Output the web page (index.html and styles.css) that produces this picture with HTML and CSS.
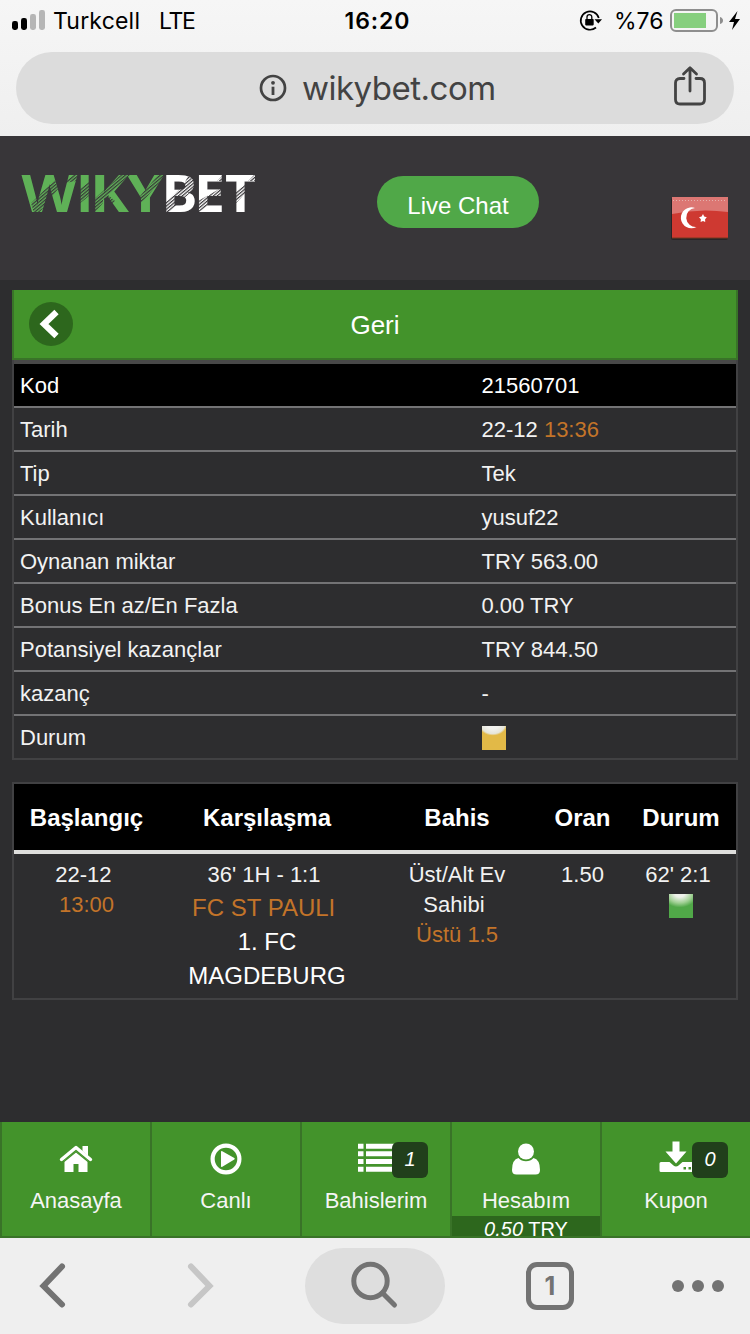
FILE: index.html
```html
<!DOCTYPE html>
<html lang="tr">
<head>
<meta charset="utf-8">
<title>Wikybet</title>
<link rel="stylesheet" href="styles.css">
</head>
<body>
<header class="browser-top">
  <div class="status">
    <div class="status-left">
      <svg class="signal" width="34" height="22" viewBox="0 0 34 22"><rect x="0" y="11" width="6" height="9" rx="2.4"/><rect x="9" y="8" width="6" height="12" rx="2.4"/><rect class="dim" x="18" y="4" width="6" height="16" rx="2.4"/><rect class="dim" x="27" y="0" width="6" height="20" rx="2.4"/></svg>
      <span class="carrier">Turkcell</span><span class="network">LTE</span>
    </div>
    <div class="clock">16:20</div>
    <div class="status-right">
      <svg class="lock" width="24" height="22" viewBox="0 0 24 22"><path d="M19.800 8A9.200 9.200 0 1 0 17 17.500" fill="none" stroke="#000" stroke-width="1.700"/><path d="M15.500 9.200H23L19.300 13.500z"/><rect x="6.200" y="9" width="8.500" height="6.400" rx=".8"/><path d="M8 9.500V7a2.400 2.400 0 0 1 4.800 0v2.500" fill="none" stroke="#000" stroke-width="1.300"/></svg>
      <span class="percent">%76</span>
      <svg class="battery" width="72" height="24" viewBox="0 0 72 24"><rect x="1" y="1" width="46" height="21" rx="5" fill="none" stroke="#8e8e8e" stroke-width="2"/><rect x="4" y="4" width="32" height="15" fill="#86cf7e"/><path d="M50 8q3 1 3 3.500T50 15z" fill="#8e8e8e"/><path d="M67.500 2 59 13h5l-2 8L70 10h-5z"/></svg>
    </div>
  </div>
  <div class="address">
    <svg class="info" width="28" height="28" viewBox="0 0 28 28"><circle cx="14" cy="14" r="12" fill="none" stroke="#434343" stroke-width="2.700"/><circle cx="14" cy="8.800" r="1.900" fill="#434343"/><rect x="12.600" y="12.700" width="2.800" height="8.300" fill="#434343"/></svg>
    <span class="url">wikybet.com</span>
    <svg class="share" width="32" height="40" viewBox="0 0 32 40" fill="none" stroke="#434343" stroke-width="2.800" stroke-linecap="round" stroke-linejoin="round"><path d="M10 12.500H6q-4.500 0-4.500 4.500v16.500q0 4.500 4.500 4.500h20q4.500 0 4.500-4.500V17q0-4.500-4.500-4.500h-4M16 25V2M9.500 8 16 1.700 22.500 8"/></svg>
  </div>
</header>

<main class="page">
  <div class="brand-bar">
    <svg class="logo" width="238" height="44" viewBox="0 0 238 44">
      <defs>
        <pattern id="hatch" width="3" height="2.500" patternUnits="userSpaceOnUse" patternTransform="rotate(-40)"><rect width="3" height="1.200" fill="#383639"/></pattern>
      </defs>
      <text class="logo-green" y="39"><tspan x="-.5" textLength="56" lengthAdjust="spacingAndGlyphs">W</tspan><tspan x="54">I</tspan><tspan x="68" textLength="39" lengthAdjust="spacingAndGlyphs">K</tspan><tspan x="105" textLength="37" lengthAdjust="spacingAndGlyphs">Y</tspan></text>
      <text class="logo-white" y="39"><tspan x="139.500" textLength="36" lengthAdjust="spacingAndGlyphs">B</tspan><tspan x="172" textLength="31" lengthAdjust="spacingAndGlyphs">E</tspan><tspan x="203" textLength="31" lengthAdjust="spacingAndGlyphs">T</tspan></text>
      <path fill="url(#hatch)" d="M9 30 33 7l3 9L17 40h-5zM43 9 54 0h4l-4 8-11 2zM56 18l12-10v14L56 32zM71 27 101 0h9L86 22l7 6-4 4-8-6v4l-9 10zM118 23 138 0h6l-3 6-22 24zM143 30l18-17 5-10 9 6-5 9-24 22h-3zM176 28l25-14v7l-25 19zM195 8l8-8v8zM213 20l11-10v10l-11 11zM226 8l9-9v9z"/>
    </svg>
    <a class="chat">Live Chat</a>
    <svg class="flag" width="60" height="46" viewBox="0 0 60 46">
      <rect x="1" y="2" width="57" height="42" rx="2" fill="#272527"/><rect x="2" y="1" width="56" height="41" fill="#ce3931"/><path d="M2 1h56v15q-28-4-56 2z" fill="#dc7773"/>
      <path d="M3 4.500h54" stroke="#e6b0ac" stroke-dasharray="1 2"/><path d="M2 42h56" stroke="#743921"/>
      <path d="M25 12a10.500 10.500 0 1 0 1.500 19 8.500 8.500 0 1 1-1.500-19z" fill="#fff"/><path d="m33 18 1.200 2.500 2.600.7-1.700 2.100.1 2.600-2.200-1-2.400 1 .3-2.600-1.900-2.100 2.600-.7z" fill="#fff"/>
    </svg>
  </div>

  <section class="coupon">
    <div class="title"><span class="back"><svg width="44" height="44" viewBox="0 0 44 44"><path d="M27.500 10 15 22l12.500 12" fill="none" stroke="#fff" stroke-width="6.200" stroke-linejoin="miter"/></svg></span><span>Geri</span></div>
    <div class="details">
      <div class="row first"><span>Kod</span><span>21560701</span></div>
      <div class="row"><span>Tarih</span><span>22-12 <b class="orange">13:36</b></span></div>
      <div class="row"><span>Tip</span><span>Tek</span></div>
      <div class="row"><span>Kullanıcı</span><span>yusuf22</span></div>
      <div class="row"><span>Oynanan miktar</span><span>TRY 563.00</span></div>
      <div class="row"><span>Bonus En az/En Fazla</span><span>0.00 TRY</span></div>
      <div class="row"><span>Potansiyel kazançlar</span><span>TRY 844.50</span></div>
      <div class="row"><span>kazanç</span><span>-</span></div>
      <div class="row"><span>Durum</span><span class="state pending"></span></div>
    </div>
  </section>

  <section class="bets">
    <div class="bets-head"><span>Başlangıç</span><span>Karşılaşma</span><span>Bahis</span><span>Oran</span><span>Durum</span></div>
    <div class="bets-body">
      <div><p>22-12&nbsp;</p><p class="orange">13:00</p></div>
      <div><p>36' 1H - 1:1&nbsp;</p><p class="team orange">FC ST PAULI&nbsp;</p><p class="team">1. FC</p><p class="team">MAGDEBURG</p></div>
      <div><p>Üst/Alt Ev</p><p>Sahibi&nbsp;</p><p class="orange">Üstü 1.5</p></div>
      <div><p>1.50</p></div>
      <div><p>62' 2:1&nbsp;</p><p class="state won"></p></div>
    </div>
  </section>
</main>

<nav class="tabs">
  <a class="tab"><svg width="34" height="34" viewBox="0 0 34 34"><path d="M2.500 16.500 17 4.500l14.500 12" fill="none" stroke="#fff" stroke-width="3.400" stroke-linecap="round" stroke-linejoin="round"/><path d="M23.500 3H29v10l-5.500-5zM5.500 17.500 17 8.500l11.500 9V29h-9v-8h-5v8h-9z" fill="#fff"/><path d="M5 18.500 17 8.800l12 9.700" fill="none" stroke="#43932b" stroke-width="1.200"/></svg><span>Anasayfa</span></a>
  <a class="tab"><svg width="34" height="34" viewBox="0 0 34 34"><circle cx="17" cy="16" r="13.400" fill="none" stroke="#fff" stroke-width="4.200"/><path d="M12 9q0-1.500 1.300-.7l12 6.700q1 .9 0 1.600l-12 7.100q-1.300.7-1.300-.8z" fill="#fff"/></svg><span>Canlı</span></a>
  <a class="tab"><svg width="36" height="34" viewBox="0 0 36 34" fill="#fff"><path d="M0 .7h5.500v5H0zM8 .7h28v5H8zM0 8.300h5.500v5H0zM8 8.300h28v5H8zM0 16h5.500v5H0zM8 16h28v5H8zM0 23.700h5.500v5H0zM8 23.700h28v5H8z"/></svg><span>Bahislerim</span><i class="badge">1</i></a>
  <a class="tab"><svg width="34" height="34" viewBox="0 0 34 34" fill="#fff"><circle cx="17" cy="8.500" r="8"/><path d="M9.500 15Q3 16.500 3 27q0 4.500 4.500 4.500h19Q31 31.500 31 27q0-10.500-6.500-12-3 3.200-7.500 3.200T9.500 15z"/></svg><span>Hesabım</span><small class="balance"><i>0.50</i> TRY</small></a>
  <a class="tab"><svg width="34" height="34" viewBox="0 0 34 34" fill="#fff"><path d="M13.500-1.500h7v10h7L17 20.500 6.500 8.500h7z"/><path fill-rule="evenodd" d="M2 19h8.500l4 3.500q2.500 2 5 0l4-3.500H34v10H2q-1.500 0-1.500-1.500v-7Q.5 19 2 19zM24.500 24v2.500H27V24zm5 0v2.500H32V24z"/></svg><span>Kupon</span><i class="badge">0</i></a>
</nav>

<footer class="browser-bottom">
  <span class="tool"><svg width="28" height="50" viewBox="0 0 28 50"><path d="M23 5.500 4.500 25 23 43.500" class="chevron"/></svg></span>
  <span class="tool"><svg width="28" height="50" viewBox="0 0 28 50"><path d="M5 5.500 23.500 25 5 43.500" class="chevron light"/></svg></span>
  <span class="tool search"><svg width="50" height="50" viewBox="0 0 50 50" fill="none" stroke="#737373" stroke-width="5"><circle cx="20.500" cy="20" r="16.700"/><path d="M32.500 32 44.500 44" stroke-linecap="round"/></svg></span>
  <span class="tool"><b class="count">1</b></span>
  <span class="tool"><svg width="52" height="12" viewBox="0 0 52 12" fill="#737373"><circle cx="6" cy="6" r="6"/><circle cx="26" cy="6" r="6"/><circle cx="46" cy="6" r="6"/></svg></span>
</footer>
</body>
</html>
```
FILE: styles.css
```css
* { box-sizing: border-box; }
body { margin: 0; width: 750px; height: 1334px; display: flex; flex-direction: column; background: #2d2d2f; color: #f2f2f2; font: 22px "Liberation Sans", Arial, sans-serif; }
svg { display: block; flex: none; overflow: visible; }
p { margin: 0; }

.browser-top { height: 136px; flex: none; padding: 0 16px; background: linear-gradient(#f6f6f6, #efefef); font-family: Inter, sans-serif; color: #000; }
.status { height: 52px; display: grid; grid-template-columns: 1fr auto 1fr; align-items: start; margin: 0 -4px; }
.status-left, .status-right { display: flex; align-items: flex-start; }
.status-left { padding-top: 10px; }
.signal .dim { fill: #b5b5b5; }
.carrier, .network, .clock, .percent { font-size: 23px; line-height: 26px; white-space: nowrap; }
.carrier { margin: -2px 0 0 7px; letter-spacing: .2px; width: 106px; }
.network { margin-top: -2px; letter-spacing: -1.3px; }
.clock { padding: 8px 0 0 5px; font-weight: 600; letter-spacing: .9px; }
.status-right { justify-content: flex-end; padding-top: 9px; }
.lock { margin: 1px 11px 0 0; }
.percent { margin-top: -1px; width: 56px; }
.battery { margin-right: -4px; }
.address { height: 72px; border-radius: 36px; background: #dcdcdc; color: #434343; display: flex; align-items: center; padding: 0 28px 0 243px; }
.url { margin-left: 15px; font-size: 33px; line-height: 40px; letter-spacing: -.5px; flex: 1; }
.share { margin-top: -4px; }

.page { flex: 1; min-height: 0; }
.brand-bar { height: 144px; background: #383639; display: flex; align-items: flex-start; padding: 0 20px 0 22px; }
.logo { margin-top: 37px; }
.logo-green, .logo-white { font: 700 52.500px "Open Sans", sans-serif; }
.logo-green { fill: #5fb157; }
.logo-white { fill: #fff; }
.chat { margin: 40px 0 0 117px; width: 162px; height: 52px; border-radius: 26px; background: #50a848; color: #fff; font-size: 24px; line-height: 60px; text-align: center; }
.flag { margin: 60px 0 0 auto; }

.coupon { margin: 10px 12px 0; }
.title { height: 70px; background: #43932b; border-left: 2px solid #397328; border-right: 2px solid #397328; border-bottom: 2px solid #397328; display: grid; grid-template-columns: 60px 1fr 60px; align-items: center; text-align: center; font-size: 26px; color: #fff; }
.title > span { padding-top: 2px; }
.title .back { width: 44px; height: 44px; margin-left: 15px; padding: 0; border-radius: 50%; background: #2d671d; }
.details { border: 2px solid #414143; border-top: 0; }
.row { height: 44px; border-top: 2px solid #737375; display: grid; grid-template-columns: 461.5px 1fr; align-items: center; padding: 0 6px; line-height: 44px; }
.row > span { height: 42px; }
.row.first { height: 46px; background: #000; border-top: 4px solid #484848; color: #fff; }
.orange { color: #c37429; font-weight: 400; }
.row > .state, .state { width: 24px; height: 24px; }
.pending { background: radial-gradient(20px 16px at 45% -8%, #f2f2ef 0 30%, #e6e5d9 60%, #e2b947 72%); margin: 1px 0 0 .5px; }
.won { margin: 4px auto 0; background: radial-gradient(20px 16px at 45% -4%, #eef1eb 25%, #a0d094 62%, #50a848 90%); }

.bets { margin: 22px 12px 0; height: 218px; border: 2px solid #414143; }
.bets-head, .bets-body { display: grid; grid-template-columns: 145px 216px 164px 87px 110px; text-align: center; }
.bets-head { height: 70px; background: #000; border-bottom: 4px solid #dededc; font-size: 24px; font-weight: 700; line-height: 68px; color: #fff; }
.bets-body { padding-top: 6px; line-height: 30px; }
.bets-body .team { font-size: 24px; line-height: 34px; }
.bets-body .team.orange { margin-top: 1px; }
.team:not(.orange) { color: #fff; }

.tabs { height: 116px; flex: none; display: grid; grid-template-columns: repeat(5, 150px); background: #43932b; border-bottom: 2px solid #397328; color: #f5f5f5; }
.tab { position: relative; border-left: 2px solid #397328; display: flex; flex-direction: column; align-items: center; padding-top: 21px; }
.tab > span { margin-top: 10px; line-height: 28px; }
.badge { position: absolute; left: 90px; top: 20px; width: 36px; height: 36px; border-radius: 6px; background: #213f1b; font-size: 20px; line-height: 35px; text-align: center; color: #fff; }
.balance { align-self: stretch; text-align: center; margin-top: 1px; height: 20px; background: #2d671d; font-size: 20px; line-height: 26px; color: #fff; }

.browser-bottom { height: 96px; flex: none; display: grid; grid-template-columns: 105px 190px 160px 190px 105px; background: #efefef; }
.tool { display: flex; align-items: center; justify-content: center; }
.search { width: 140px; height: 76px; margin: 10px; border-radius: 38px; background: #dedede; }
.chevron { fill: none; stroke: #737373; stroke-width: 6; stroke-linecap: round; }
.chevron.light { stroke: #c6c6c6; }
.count { width: 48px; height: 48px; border: 5px solid #737373; border-radius: 11px; color: #737373; font: 700 25px/38px Inter, sans-serif; text-align: center; }
```
